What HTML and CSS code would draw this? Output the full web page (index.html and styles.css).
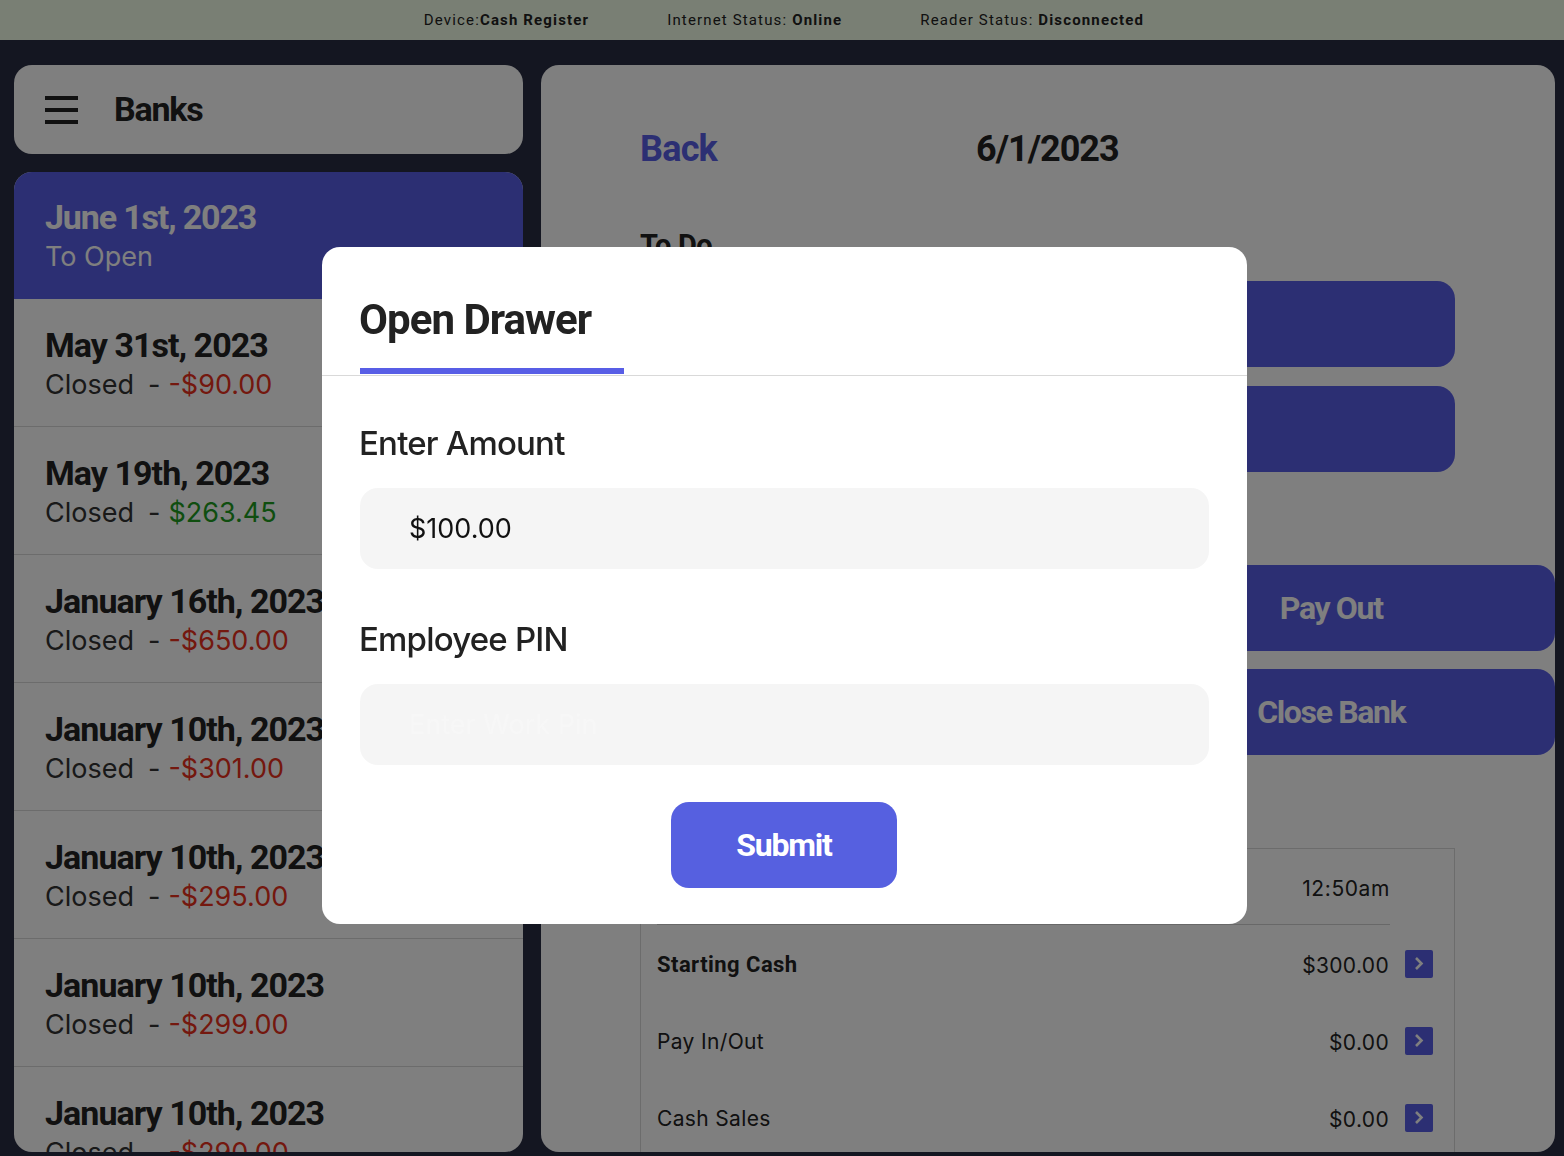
FILE: index.html
```html
<!DOCTYPE html>
<html lang="en">
<head>
    <meta charset="UTF-8">
    <title>Banks</title>
    <link rel="stylesheet" href="styles.css">
</head>
<body>
    <div class="status-bar">
        <span>Device:<strong>Cash Register</strong></span>
        <span>Internet Status: <strong>Online</strong></span>
        <span>Reader Status: <strong>Disconnected</strong></span>
    </div>

    <div class="main">
        <div class="sidebar">
            <div class="side-header">
                <div class="menu-icon"><i></i><i></i><i></i></div>
                <h2>Banks</h2>
            </div>
            <div class="bank-list">
                <div class="bank active">
                    <h3>June 1st, 2023</h3>
                    <p>To Open</p>
                </div>
                <div class="bank">
                    <h3>May 31st, 2023</h3>
                    <p>Closed<span class="dash">-</span><span class="neg">-$90.00</span></p>
                </div>
                <div class="bank">
                    <h3>May 19th, 2023</h3>
                    <p>Closed<span class="dash">-</span><span class="pos">$263.45</span></p>
                </div>
                <div class="bank">
                    <h3>January 16th, 2023</h3>
                    <p>Closed<span class="dash">-</span><span class="neg">-$650.00</span></p>
                </div>
                <div class="bank">
                    <h3>January 10th, 2023</h3>
                    <p>Closed<span class="dash">-</span><span class="neg">-$301.00</span></p>
                </div>
                <div class="bank">
                    <h3>January 10th, 2023</h3>
                    <p>Closed<span class="dash">-</span><span class="neg">-$295.00</span></p>
                </div>
                <div class="bank">
                    <h3>January 10th, 2023</h3>
                    <p>Closed<span class="dash">-</span><span class="neg">-$299.00</span></p>
                </div>
                <div class="bank">
                    <h3>January 10th, 2023</h3>
                    <p>Closed<span class="dash">-</span><span class="neg">-$290.00</span></p>
                </div>
            </div>
        </div>

        <div class="content">
            <div class="content-top">
                <a class="back">Back</a>
                <div class="date">6/1/2023</div>
            </div>
            <h4 class="todo-title">To Do</h4>
            <div class="todo-btn"></div>
            <div class="todo-btn"></div>
            <div class="action-row">
                <div class="action-btn">Pay In</div>
                <div class="action-btn">Pay Out</div>
            </div>
            <div class="action-row">
                <div class="action-btn">Open Drawer</div>
                <div class="action-btn">Close Bank</div>
            </div>
            <div class="summary">
                <div class="row first">
                    <span class="row-label">Opened</span>
                    <span class="row-value">12:50am</span>
                </div>
                <div class="row">
                    <span class="row-label bold">Starting Cash</span>
                    <span class="row-value">$300.00</span>
                    <span class="chev"><svg width="14" height="14" viewBox="0 0 14 14"><path d="M4 1 L9.5 6.5 L4 12" fill="none" stroke="#fff" stroke-width="2.6"/></svg></span>
                </div>
                <div class="row">
                    <span class="row-label">Pay In/Out</span>
                    <span class="row-value">$0.00</span>
                    <span class="chev"><svg width="14" height="14" viewBox="0 0 14 14"><path d="M4 1 L9.5 6.5 L4 12" fill="none" stroke="#fff" stroke-width="2.6"/></svg></span>
                </div>
                <div class="row">
                    <span class="row-label">Cash Sales</span>
                    <span class="row-value">$0.00</span>
                    <span class="chev"><svg width="14" height="14" viewBox="0 0 14 14"><path d="M4 1 L9.5 6.5 L4 12" fill="none" stroke="#fff" stroke-width="2.6"/></svg></span>
                </div>
            </div>
        </div>
    </div>

    <div class="overlay"></div>

    <div class="modal">
        <div class="modal-head">
            <h1>Open Drawer</h1>
        </div>
        <div class="modal-body">
            <label class="field-label">Enter Amount</label>
            <input class="field" type="text" value="$100.00">
            <label class="field-label second">Employee PIN</label>
            <input class="field pin" type="text" placeholder="Enter Work Pin">
            <button class="submit">Submit</button>
        </div>
    </div>
</body>
</html>
```

FILE: styles.css
```css
html, body {
    height: 100%;
}
body {
    margin: 0;
    height: 1156px;
    overflow: hidden;
    background-color: #282c42;
    color: #222;
    font-family: Inter, 'Noto Sans', sans-serif;
}
.status-bar {
    height: 40px;
    background-color: #f3ffe8;
    display: flex;
    justify-content: center;
    align-items: center;
    gap: 78px;
    padding-left: 4px;
    font-family: Roboto, sans-serif;
    font-size: 15px;
    letter-spacing: 1.15px;
    color: #222;
}
.status-bar strong {
    font-weight: 700;
}
.main {
    display: flex;
    gap: 18px;
    padding: 25px 9px 0 14px;
    height: 1087px;
}
.sidebar {
    width: 509px;
    flex-shrink: 0;
    display: flex;
    flex-direction: column;
    gap: 18px;
}
.side-header {
    height: 89px;
    flex-shrink: 0;
    background-color: #fff;
    border-radius: 18px;
    display: flex;
    align-items: center;
    padding-left: 31px;
    gap: 36px;
}
.menu-icon {
    display: flex;
    flex-direction: column;
    gap: 8px;
    width: 33px;
}
.menu-icon i {
    display: block;
    height: 4px;
    background-color: #222;
}
.side-header h2 {
    margin: 0 0 2px;
    font-family: Roboto, sans-serif;
    font-size: 34px;
    font-weight: 700;
    letter-spacing: -1.2px;
    color: #222;
}
.bank-list {
    flex: 1;
    overflow: hidden;
    background-color: #fff;
    border-radius: 18px;
}
.bank {
    padding: 26px 31px 0;
    height: 101px;
    border-bottom: 1px solid #d8d8d8;
}
.bank h3 {
    margin: 0;
    font-family: Roboto, sans-serif;
    font-size: 34px;
    line-height: 40px;
    font-weight: 700;
    letter-spacing: -0.95px;
    white-space: nowrap;
}
.bank p {
    margin: 1px 0 0;
    font-size: 27px;
    line-height: 38px;
    color: #333;
}
.bank.active {
    padding-top: 25px;
    height: 102px;
    background-color: #585ee6;
    color: #fff;
    border-bottom: none;
}
.bank.active h3 {
    letter-spacing: -1.15px;
}
.bank.active p {
    color: #fff;
}
.dash {
    margin: 0 8px 0 14px;
}
.neg {
    color: #e8301c;
}
.pos {
    color: #1e9c1e;
}
.content {
    flex: 1;
    background-color: #fff;
    border-radius: 18px;
    padding: 0 0 0 99px;
    overflow: hidden;
}
.content-top {
    display: flex;
    align-items: center;
    height: 167px;
}
.back {
    font-family: Roboto, sans-serif;
    font-size: 36px;
    font-weight: 700;
    letter-spacing: -0.8px;
    color: #585ee6;
    width: 336px;
}
.date {
    font-family: Roboto, sans-serif;
    font-size: 36px;
    font-weight: 700;
    letter-spacing: -1px;
    color: #222;
}
.todo-title {
    margin: -1px 0 0;
    font-family: Roboto, sans-serif;
    font-size: 29px;
    line-height: 28px;
    font-weight: 700;
    letter-spacing: -0.4px;
}
.todo-btn {
    width: 815px;
    height: 86px;
    margin-top: 19px;
    background-color: #585ee6;
    border-radius: 18px;
}
.todo-title + .todo-btn {
    margin-top: 22px;
}
.action-row {
    display: flex;
    gap: 30px;
    margin-top: 18px;
    width: 915px;
}
.todo-btn + .action-row {
    margin-top: 93px;
}
.action-btn {
    flex: 1;
    height: 86px;
    padding-right: 5px;
    background-color: #585ee6;
    border-radius: 18px;
    color: #fff;
    font-family: Roboto, sans-serif;
    font-size: 32px;
    font-weight: 700;
    letter-spacing: -1.35px;
    display: flex;
    align-items: center;
    justify-content: center;
}
.summary {
    width: 815px;
    margin-top: 93px;
    border: 1px solid #d8d8d8;
    border-bottom: none;
    box-sizing: border-box;
    padding: 0 21px 0 16px;
}
.row {
    display: flex;
    align-items: center;
    height: 77px;
    font-size: 21px;
    letter-spacing: 0.35px;
    color: #222;
}
.row.first {
    height: 75px;
    margin-right: 43px;
    border-bottom: 1px solid #d0d0d0;
}
.row-label {
    flex: 1;
    padding-top: 2px;
}
.row-value {
    padding-top: 3px;
}
.row.first .row-value {
    padding-top: 4px;
    letter-spacing: 0.6px;
}
.row-label.bold {
    font-weight: 700;
    font-family: Roboto, sans-serif;
    font-size: 22px;
    letter-spacing: 0.45px;
}
.chev {
    width: 28px;
    height: 28px;
    margin-left: 16px;
    background-color: #585ee6;
    border-radius: 2px;
    display: flex;
    align-items: center;
    justify-content: center;
}
.overlay {
    position: fixed;
    inset: 0;
    background-color: rgba(0, 0, 0, 0.5);
}
.modal {
    position: fixed;
    left: 322px;
    top: 247px;
    width: 925px;
    height: 677px;
    background-color: #fff;
    border-radius: 18px;
    overflow: hidden;
}
.modal-head {
    height: 128px;
    border-bottom: 1px solid #d9d9d9;
    padding: 0 38px;
}
.modal-head h1 {
    margin: 0;
    width: 264px;
    height: 121px;
    border-bottom: 6px solid #585ee6;
    font-family: Roboto, sans-serif;
    font-size: 42px;
    line-height: 146px;
    font-weight: 700;
    letter-spacing: -0.95px;
    text-indent: -1px;
    white-space: nowrap;
    color: #222;
}
.modal-body {
    padding: 47px 38px 0;
    display: flex;
    flex-direction: column;
}
.field-label {
    font-size: 33px;
    line-height: 40px;
    font-weight: 500;
    letter-spacing: -0.8px;
    text-indent: -1px;
    color: #222;
}
.field-label.second {
    margin-top: 50px;
}
.field {
    margin-top: 25px;
    height: 81px;
    border: none;
    border-radius: 18px;
    background-color: #f5f5f5;
    padding: 0 49px;
    font-family: Inter, sans-serif;
    font-size: 27px;
    color: #111;
    outline: none;
}
.pin::placeholder {
    color: #f7f7f7;
    opacity: 1;
}
.submit {
    align-self: center;
    margin-top: 37px;
    margin-right: 1px;
    width: 226px;
    height: 86px;
    border: none;
    border-radius: 18px;
    background-color: #5660e0;
    color: #fff;
    font-family: Roboto, sans-serif;
    font-size: 32px;
    font-weight: 700;
    letter-spacing: -1.2px;
}
```
